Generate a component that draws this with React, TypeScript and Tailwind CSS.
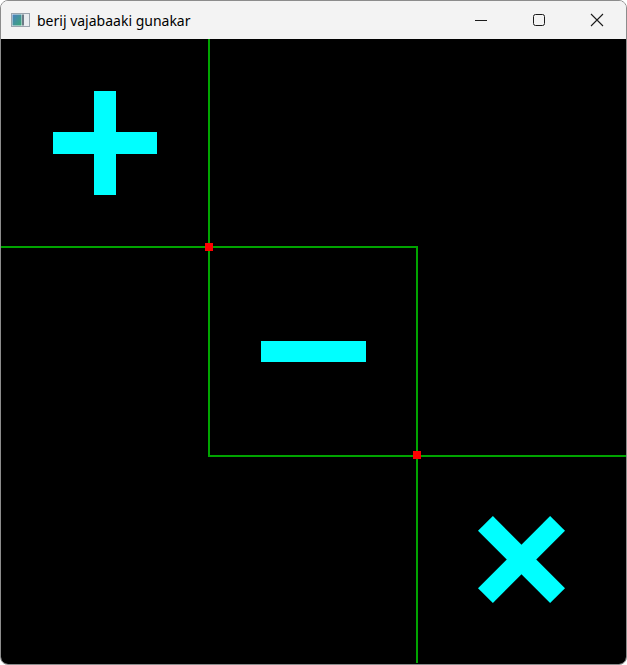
import React from 'react';

const CYAN = '#00ffff';
const GREEN = '#00a400';

const AppIcon = () => (
  <svg width="19" height="14" viewBox="0 0 19 14">
    <defs>
      <linearGradient id="ig" x1="0" y1="0" x2="1" y2="1">
        <stop offset="0" stopColor="#4a7fc0" />
        <stop offset="1" stopColor="#3aa876" />
      </linearGradient>
    </defs>
    <rect x="0.5" y="0.5" width="18" height="13" fill="#e8ecef" stroke="#9aa4ad" />
    <rect x="1.5" y="1.5" width="9" height="11" fill="url(#ig)" />
    <rect x="11" y="1.5" width="2" height="11" fill="#6d7a86" />
  </svg>
);

const Controls = () => (
  <div className="ml-auto flex h-full">
    <div className="flex w-[58px] items-center justify-center">
      <svg width="12" height="12" viewBox="0 0 12 12">
        <line x1="0" y1="6.5" x2="12" y2="6.5" stroke="#1b1b1b" strokeWidth="1" />
      </svg>
    </div>
    <div className="flex w-[58px] items-center justify-center">
      <svg width="12" height="12" viewBox="0 0 12 12">
        <rect x="0.5" y="0.5" width="11" height="11" rx="2" fill="none" stroke="#1b1b1b" strokeWidth="1" />
      </svg>
    </div>
    <div className="flex w-[58px] items-center justify-center">
      <svg width="14" height="14" viewBox="0 0 14 14">
        <path d="M1 1 L13 13 M13 1 L1 13" stroke="#1b1b1b" strokeWidth="1.1" />
      </svg>
    </div>
  </div>
);

// the drawing surface: grid lines, junction dots and the three operators
const Board = () => (
  <svg width="625" height="624" viewBox="0 0 625 624" className="block">
    <rect x="207" y="0" width="2" height="418" fill={GREEN} />
    <rect x="0" y="207" width="417" height="2" fill={GREEN} />
    <rect x="415" y="207" width="2" height="417" fill={GREEN} />
    <rect x="207" y="416" width="418" height="2" fill={GREEN} />

    <rect x="204" y="204" width="8" height="8" fill="#ff0000" />
    <rect x="412" y="412" width="8" height="8" fill="#ff0000" />

    {/* plus */}
    <rect x="93" y="52" width="22" height="104" fill={CYAN} />
    <rect x="52" y="93" width="104" height="22" fill={CYAN} />

    {/* minus */}
    <rect x="260" y="302" width="105" height="21" fill={CYAN} />

    {/* cross */}
    <g transform="rotate(45 520.5 520.5)">
      <rect x="469.5" y="510" width="102" height="21" fill={CYAN} />
      <rect x="510" y="469.5" width="21" height="102" fill={CYAN} />
    </g>
  </svg>
);

export default function App() {
  return (
    <div className="h-[665px] w-[627px] bg-white">
      <div className="flex h-full w-full flex-col overflow-hidden rounded-[8px] border border-[#8c8c8c]">
        <div className="flex h-[38px] shrink-0 items-center bg-[#f3f3f3]">
          <div className="ml-[10px] flex items-center">
            <AppIcon />
          </div>
          <span
            className="ml-[7px] text-[14px] text-black"
            style={{ fontFamily: '"Segoe UI", "Noto Sans", "Open Sans", sans-serif' }}
          >
            berij vajabaaki gunakar
          </span>
          <Controls />
        </div>
        <div className="flex-1 bg-black">
          <Board />
        </div>
      </div>
    </div>
  );
}
